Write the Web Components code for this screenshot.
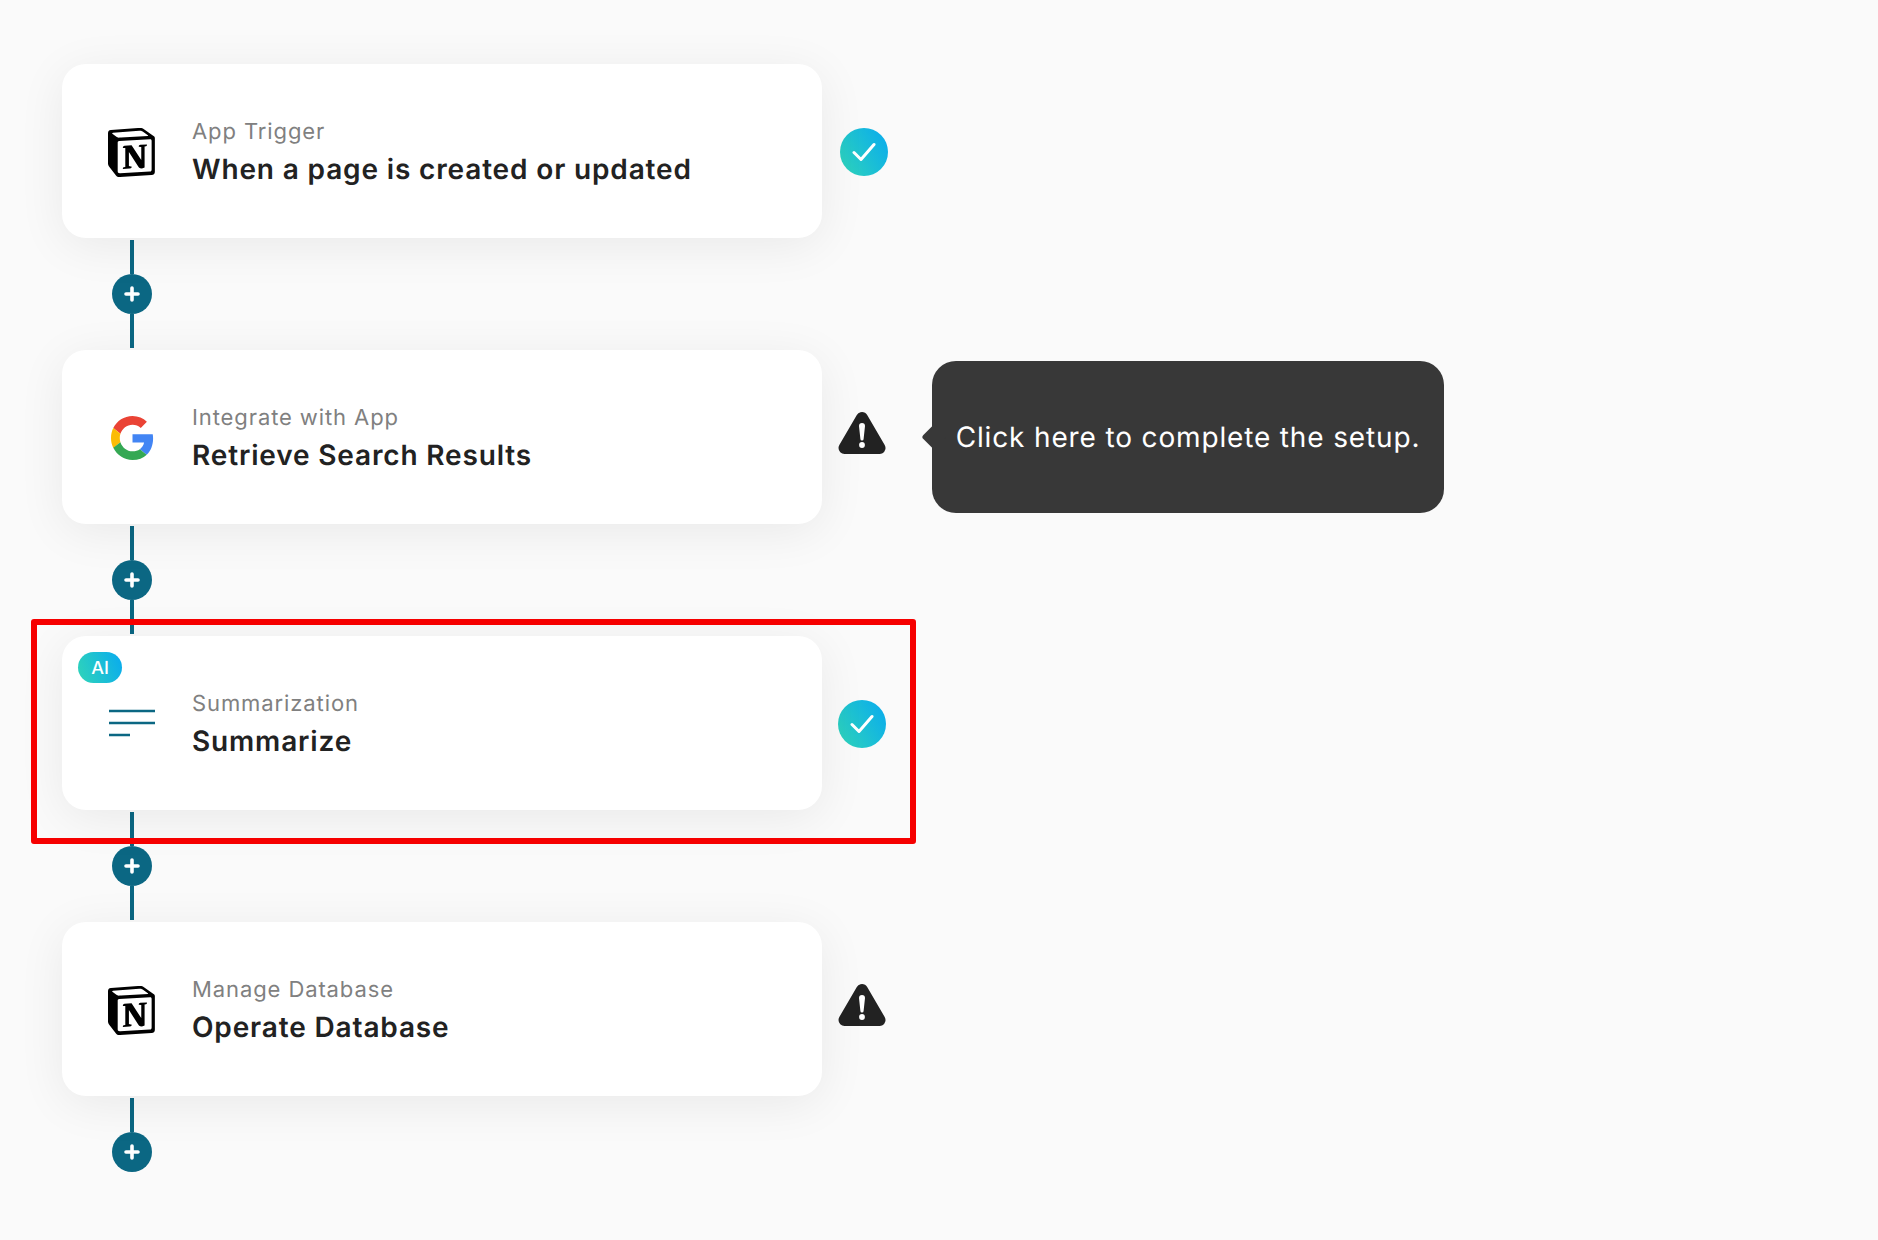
<!DOCTYPE html>
<html lang="en">
<head>
<meta charset="utf-8">
<title>Flow</title>
<style>
    html, body { margin: 0; background: #fafafa; }
    body { height: 1240px; overflow: hidden; font-family: Inter, "Liberation Sans", sans-serif; text-rendering: geometricPrecision; }
</style>
</head>
<body>
<flow-list>
    <flow-step label="App Trigger" heading="When a page is created or updated">
        <notion-logo slot="icon"></notion-logo>
        <status-check slot="status" style="margin-left:2px"></status-check>
    </flow-step>
    <flow-connector></flow-connector>
    <flow-step label="Integrate with App" heading="Retrieve Search Results">
        <google-logo slot="icon"></google-logo>
        <status-warning slot="status"></status-warning>
        <setup-tooltip slot="overlay">Click here to complete the setup.</setup-tooltip>
    </flow-step>
    <flow-connector></flow-connector>
    <flow-step label="Summarization" heading="Summarize">
        <ai-badge slot="badge">AI</ai-badge>
        <lines-icon slot="icon"></lines-icon>
        <status-check slot="status"></status-check>
        <red-highlight slot="overlay"></red-highlight>
    </flow-step>
    <flow-connector></flow-connector>
    <flow-step label="Manage Database" heading="Operate Database">
        <notion-logo slot="icon"></notion-logo>
        <status-warning slot="status"></status-warning>
    </flow-step>
    <flow-connector last></flow-connector>
</flow-list>

<script>
const LINE_COLOR = '#0b6783';

class FlowList extends HTMLElement {
    constructor() {
        super();
        this.attachShadow({ mode: 'open' });
        this.shadowRoot.innerHTML = `
            <style>
                :host {
                    display: flex;
                    flex-direction: column;
                    align-items: flex-start;
                    padding: 64px 0 0 62px;
                }
            </style>
            <slot></slot>
        `;
    }
}

class FlowStep extends HTMLElement {
    constructor() {
        super();
        this.attachShadow({ mode: 'open' });
        this.shadowRoot.innerHTML = `
            <style>
                :host {
                    display: flex;
                    align-items: center;
                    position: relative;
                }
                .card {
                    position: relative;
                    box-sizing: border-box;
                    width: 760px;
                    height: 174px;
                    display: flex;
                    align-items: center;
                    gap: 36px;
                    padding: 0 0 0 46px;
                    background: #fff;
                    border-radius: 24px;
                    box-shadow: 0 8px 48px rgba(0, 0, 0, 0.07);
                }
                .icon {
                    width: 48px;
                    height: 48px;
                    display: flex;
                    align-items: center;
                    justify-content: center;
                }
                .label {
                    font-size: 22px;
                    line-height: 32px;
                    letter-spacing: 0.9px;
                    color: #808080;
                    margin-top: 1px;
                }
                .heading {
                    font-size: 28px;
                    line-height: 40px;
                    font-weight: 600;
                    letter-spacing: 0.85px;
                    color: #222;
                    margin-top: 1px;
                }
                .text {
                    margin-top: 2px;
                }
                .status {
                    margin-left: 16px;
                    display: flex;
                }
            </style>
            <div class="card">
                <slot name="badge"></slot>
                <div class="icon"><slot name="icon"></slot></div>
                <div class="text">
                    <div class="label"></div>
                    <div class="heading"></div>
                </div>
            </div>
            <div class="status"><slot name="status"></slot></div>
            <slot name="overlay"></slot>
        `;
    }

    connectedCallback() {
        this.shadowRoot.querySelector('.label').textContent = this.getAttribute('label');
        this.shadowRoot.querySelector('.heading').textContent = this.getAttribute('heading');
    }
}

class FlowConnector extends HTMLElement {
    constructor() {
        super();
        this.attachShadow({ mode: 'open' });
        this.shadowRoot.innerHTML = `
            <style>
                :host {
                    display: flex;
                    flex-direction: column;
                    align-items: center;
                    width: 40px;
                    height: 108px;
                    padding: 2px 0;
                    margin-left: 50px;
                }
                :host([last]) {
                    height: 74px;
                    padding-bottom: 0;
                }
                .line {
                    width: 4px;
                    background: ${LINE_COLOR};
                }
                .top { height: 34px; }
                .bottom { flex: 1; }
                .plus {
                    flex: none;
                    width: 40px;
                    height: 40px;
                    border-radius: 50%;
                    background: ${LINE_COLOR};
                    display: flex;
                    align-items: center;
                    justify-content: center;
                }
            </style>
            <div class="line top"></div>
            <div class="plus">
                <svg width="16" height="16" viewBox="0 0 16 16">
                    <path d="M8 2v12M2 8h12" stroke="#fff" stroke-width="3.6" stroke-linecap="round" fill="none"/>
                </svg>
            </div>
            <div class="line bottom"></div>
        `;
    }
}

class NotionLogo extends HTMLElement {
    constructor() {
        super();
        this.attachShadow({ mode: 'open' });
        this.shadowRoot.innerHTML = `
            <style>:host { display: block; width: 47px; height: 49px; margin: 2px 0 0 -1px; } svg { display: block; }</style>
            <svg width="47" height="49" viewBox="0 0 96 100" preserveAspectRatio="none">
                <path fill="#fff" d="M6.017 4.313l55.333-4.087c6.797-.583 8.543-.19 12.817 2.917l17.663 12.443c2.913 2.14 3.883 2.723 3.883 5.053v68.243c0 4.277-1.553 6.807-6.99 7.193L24.467 99.967c-4.08.193-6.023-.39-8.16-3.113L3.3 79.94C.967 76.827 0 74.497 0 71.773V11.113c0-3.497 1.553-6.413 6.017-6.8z"/>
                <path fill="#000" fill-rule="evenodd" d="M61.35.227L6.017 4.314C1.553 4.7 0 7.617 0 11.113v60.66c0 2.723.967 5.053 3.3 8.167l13.007 16.913c2.137 2.723 4.08 3.307 8.16 3.113l64.257-3.89c5.433-.387 6.99-2.917 6.99-7.193V20.64c0-2.21-.873-2.847-3.443-4.733L74.167 3.143C69.894.036 68.147-.357 61.35.227zM25.92 19.523c-5.247.353-6.437.433-9.417-1.99L8.927 11.507c-.77-.78-.383-1.753 1.557-1.947l53.193-3.887c4.467-.39 6.793 1.167 8.54 2.527l9.123 6.61c.39.197 1.36 1.36.193 1.36l-54.933 3.307-.68.047zM19.803 88.3V30.367c0-2.53.777-3.697 3.103-3.893L86 22.78c2.14-.193 3.107 1.167 3.107 3.693v57.547c0 2.53-.39 4.67-3.883 4.863l-60.377 3.5c-3.493.193-5.043-.97-5.043-3.983zm59.6-54.827c.387 1.75 0 3.5-1.75 3.7l-2.91.577v42.773c-2.527 1.36-4.853 2.137-6.797 2.137-3.107 0-3.883-.973-6.21-3.887l-19.03-29.94v28.967l6.02 1.363s0 3.5-4.857 3.5l-13.39.777c-.39-.78 0-2.723 1.357-3.11l3.497-.97v-38.3L30.48 40.667c-.39-1.75.58-4.277 3.3-4.473l14.367-.967 19.8 30.327v-26.83l-5.047-.58c-.39-2.143 1.163-3.7 3.103-3.89l13.4-.78z"/>
            </svg>
        `;
    }
}

class GoogleLogo extends HTMLElement {
    constructor() {
        super();
        this.attachShadow({ mode: 'open' });
        this.shadowRoot.innerHTML = `
            <style>:host { display: block; width: 43px; height: 44px; margin: 2px 0 0 1px; } svg { display: block; }</style>
            <svg width="43" height="44" viewBox="0 0 48 48" preserveAspectRatio="none">
                <path fill="#EA4335" d="M24 9.5c3.54 0 6.71 1.22 9.21 3.6l6.85-6.85C35.9 2.38 30.47 0 24 0 14.62 0 6.51 5.38 2.56 13.22l7.98 6.19C12.43 13.72 17.74 9.5 24 9.5z"/>
                <path fill="#4285F4" d="M46.98 24.55c0-1.57-.15-3.09-.38-4.55H24v9.02h12.94c-.58 2.96-2.26 5.48-4.78 7.18l7.73 6c4.51-4.18 7.09-10.36 7.09-17.65z"/>
                <path fill="#FBBC05" d="M10.53 28.59c-.48-1.45-.76-2.99-.76-4.59s.27-3.14.76-4.59l-7.98-6.19C.92 16.46 0 20.12 0 24c0 3.88.92 7.54 2.56 10.78l7.97-6.19z"/>
                <path fill="#34A853" d="M24 48c6.48 0 11.93-2.13 15.89-5.81l-7.73-6c-2.15 1.45-4.92 2.3-8.16 2.3-6.26 0-11.57-4.22-13.47-9.91l-7.98 6.19C6.51 42.62 14.62 48 24 48z"/>
            </svg>
        `;
    }
}

class LinesIcon extends HTMLElement {
    constructor() {
        super();
        this.attachShadow({ mode: 'open' });
        this.shadowRoot.innerHTML = `
            <style>:host { display: block; width: 48px; height: 28px; } svg { display: block; }</style>
            <svg width="48" height="28" viewBox="0 0 48 28">
                <path d="M1 2h46M1 14h46M1 26h21" stroke="${LINE_COLOR}" stroke-width="2.4" fill="none"/>
            </svg>
        `;
    }
}

class StatusCheck extends HTMLElement {
    constructor() {
        super();
        this.attachShadow({ mode: 'open' });
        this.shadowRoot.innerHTML = `
            <style>
                :host {
                    display: flex;
                    align-items: center;
                    justify-content: center;
                    width: 48px;
                    height: 48px;
                    margin-top: 2px;
                    border-radius: 50%;
                    background: linear-gradient(60deg, #30d5b8, #08aaf0);
                }
            </style>
            <svg width="24" height="20" viewBox="0 0 24 20">
                <path d="M2 10.5l7 7L22 2.5" stroke="#fff" stroke-width="3" stroke-linecap="round" stroke-linejoin="round" fill="none"/>
            </svg>
        `;
    }
}

class StatusWarning extends HTMLElement {
    constructor() {
        super();
        this.attachShadow({ mode: 'open' });
        this.shadowRoot.innerHTML = `
            <style>
                :host { display: block; width: 48px; height: 44px; margin-top: -8px; }
                svg { display: block; }
            </style>
            <svg width="48" height="44" viewBox="0 0 48 44">
                <path d="M24 7L41.5 37H6.5Z" fill="#222" stroke="#222" stroke-width="12" stroke-linejoin="round"/>
                <path d="M21 15a3 3 0 0 1 6 0L25.6 28a1.6 1.6 0 0 1-3.2 0Z" fill="#fff"/>
                <circle cx="24" cy="34" r="2.9" fill="#fff"/>
            </svg>
        `;
    }
}

class AiBadge extends HTMLElement {
    constructor() {
        super();
        this.attachShadow({ mode: 'open' });
        this.shadowRoot.innerHTML = `
            <style>
                :host {
                    position: absolute;
                    left: 16px;
                    top: 16px;
                    box-sizing: border-box;
                    width: 44px;
                    height: 31px;
                    padding-top: 1px;
                    display: flex;
                    align-items: center;
                    justify-content: center;
                    border-radius: 16px;
                    background: linear-gradient(70deg, #30d5b8, #08aaf0);
                    color: #fff;
                    font-size: 18px;
                    font-weight: 500;
                }
            </style>
            <slot></slot>
        `;
    }
}

class SetupTooltip extends HTMLElement {
    constructor() {
        super();
        this.attachShadow({ mode: 'open' });
        this.shadowRoot.innerHTML = `
            <style>
                :host {
                    position: absolute;
                    left: 870px;
                    top: 11px;
                    box-sizing: border-box;
                    width: 512px;
                    height: 152px;
                    display: flex;
                    align-items: center;
                    justify-content: center;
                    background: #383838;
                    border-radius: 24px;
                    color: #fff;
                    font-size: 28px;
                    letter-spacing: 0.85px;
                    white-space: nowrap;
                }
                .arrow {
                    position: absolute;
                    left: -7px;
                    top: 67px;
                    width: 18px;
                    height: 18px;
                    background: #383838;
                    border-radius: 3px;
                    transform: rotate(45deg);
                }
            </style>
            <div class="arrow"></div>
            <slot></slot>
        `;
    }
}

class RedHighlight extends HTMLElement {
    constructor() {
        super();
        this.attachShadow({ mode: 'open' });
        this.shadowRoot.innerHTML = `
            <style>
                :host {
                    position: absolute;
                    left: -31px;
                    top: -17px;
                    box-sizing: border-box;
                    width: 885px;
                    height: 225px;
                    border: 6px solid #f60000;
                    border-radius: 3px;
                    z-index: 5;
                    pointer-events: none;
                }
            </style>
        `;
    }
}

customElements.define('flow-list', FlowList);
customElements.define('flow-step', FlowStep);
customElements.define('flow-connector', FlowConnector);
customElements.define('notion-logo', NotionLogo);
customElements.define('google-logo', GoogleLogo);
customElements.define('lines-icon', LinesIcon);
customElements.define('status-check', StatusCheck);
customElements.define('status-warning', StatusWarning);
customElements.define('ai-badge', AiBadge);
customElements.define('setup-tooltip', SetupTooltip);
customElements.define('red-highlight', RedHighlight);
</script>
</body>
</html>
